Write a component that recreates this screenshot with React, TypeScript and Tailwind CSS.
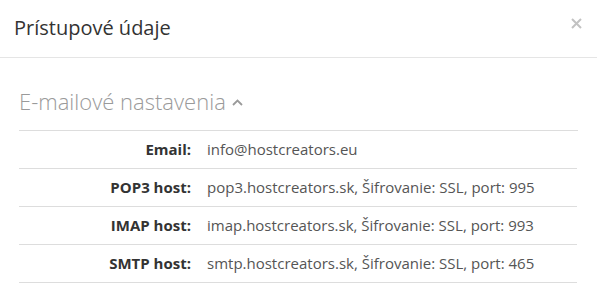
import React from 'react';

const rows = [
  { label: 'Email:', value: 'info@hostcreators.eu' },
  { label: 'POP3 host:', value: 'pop3.hostcreators.sk, Šifrovanie: SSL, port: 995' },
  { label: 'IMAP host:', value: 'imap.hostcreators.sk, Šifrovanie: SSL, port: 993' },
  { label: 'SMTP host:', value: 'smtp.hostcreators.sk, Šifrovanie: SSL, port: 465' },
];

const App: React.FC = () => {
  return (
    <div className="w-[597px] h-[288px] bg-white overflow-hidden font-['Open_Sans',sans-serif] text-[#333]">
      <div className="h-[58px] flex items-start justify-between pl-[14px] pr-[15px] pt-[18px] border-b border-[#e5e5e5]">
        <h4 className="text-[20px] leading-[20px] text-[#333]">Prístupové údaje</h4>
        <button className="text-[#c2c2c2]">
          <svg width="11" height="11" viewBox="0 0 11 11">
            <path d="M1 1l9 9M10 1l-9 9" stroke="currentColor" strokeWidth="2" />
          </svg>
        </button>
      </div>
      <div className="px-[19px] pt-[32px]">
        <h3 className="flex items-center gap-[6px] text-[22px] leading-[22px] font-light text-[#9a9a9a] pb-[18px] border-b border-[#ddd]">
          E-mailové nastavenia
          <svg width="11" height="7" viewBox="0 0 11 7" className="mt-[2px]">
            <path d="M1 6l4.5-4.5L10 6" fill="none" stroke="currentColor" strokeWidth="1.8" />
          </svg>
        </h3>
        <div className="w-[558px]">
          {rows.map((r) => (
            <div key={r.label} className="flex h-[38px] items-center border-b border-[#ddd] text-[15px]">
              <div className="w-[180px] pr-[8px] text-right font-bold text-[#333]">{r.label}</div>
              <div className="pl-[8px] text-[#555]">{r.value}</div>
            </div>
          ))}
        </div>
      </div>
    </div>
  );
};

export default App;
